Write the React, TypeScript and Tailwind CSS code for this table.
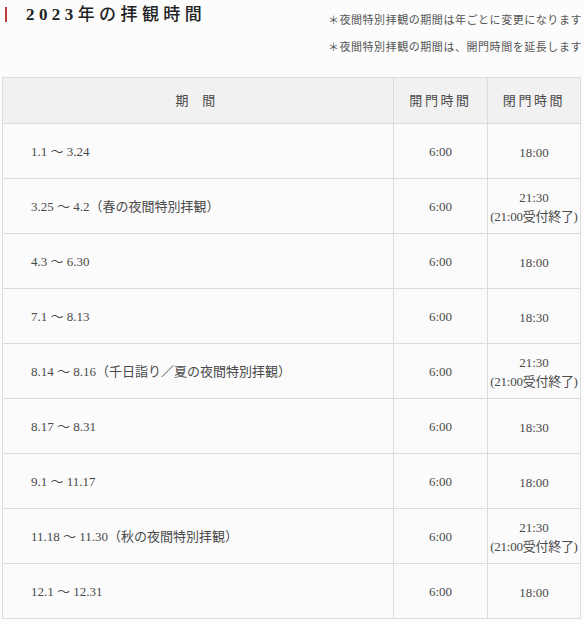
import React from 'react';

const rows: { period: string; open: string; close: string[] }[] = [
    { period: '1.1 〜 3.24', open: '6:00', close: ['18:00'] },
    { period: '3.25 〜 4.2（春の夜間特別拝観）', open: '6:00', close: ['21:30', '(21:00受付終了)'] },
    { period: '4.3 〜 6.30', open: '6:00', close: ['18:00'] },
    { period: '7.1 〜 8.13', open: '6:00', close: ['18:30'] },
    { period: '8.14 〜 8.16（千日詣り／夏の夜間特別拝観）', open: '6:00', close: ['21:30', '(21:00受付終了)'] },
    { period: '8.17 〜 8.31', open: '6:00', close: ['18:30'] },
    { period: '9.1 〜 11.17', open: '6:00', close: ['18:00'] },
    { period: '11.18 〜 11.30（秋の夜間特別拝観）', open: '6:00', close: ['21:30', '(21:00受付終了)'] },
    { period: '12.1 〜 12.31', open: '6:00', close: ['18:00'] },
];

export default function App() {
    return (
        <div className="w-[585px] h-[620px] bg-[#fcfcfc] text-[#333] font-['Liberation_Serif','Noto_Sans_CJK_JP',serif]">
            <div className="flex justify-between pt-[5px] pl-[5px] pr-[3px]">
                <div className="flex items-center h-[18px]">
                    <span className="w-[2px] h-[15px] bg-[#b83a3a]" />
                    <h1 className="ml-[19px] text-[17px] font-medium tracking-[0.26em] text-[#222] leading-none">
                        <span className="font-bold">2023</span>年の拝観時間
                    </h1>
                </div>
                <div className="text-right text-[11px] text-[#555] tracking-[0.05em] leading-[27px] pt-[2px]">
                    <p>＊夜間特別拝観の期間は年ごとに変更になります</p>
                    <p>＊夜間特別拝観の期間は、開門時間を延長します</p>
                </div>
            </div>

            <table className="mt-[16px] ml-[2px] w-[579px] border-collapse text-[13px] text-[#4a4a4a]">
                <thead>
                    <tr className="h-[46px] bg-[#f1f1f1]">
                        <th className="w-[391px] border border-[#dcdcdc] font-normal tracking-[0.4em]">期 間</th>
                        <th className="w-[94px] border border-[#dcdcdc] font-normal tracking-[0.2em]">開門時間</th>
                        <th className="border border-[#dcdcdc] font-normal tracking-[0.2em]">閉門時間</th>
                    </tr>
                </thead>
                <tbody>
                    {rows.map((r) => (
                        <tr key={r.period} className="h-[55px] bg-[#fbfbfb]">
                            <td className="border border-[#dcdcdc] pl-[28px] pt-[2px] whitespace-pre">{r.period}</td>
                            <td className="border border-[#dcdcdc] text-center pt-[2px]">{r.open}</td>
                            <td className="border border-[#dcdcdc] text-center leading-[19px] pt-[2px]">
                                {r.close.map((c) => (
                                    <div key={c} className={c.startsWith('(') ? 'tracking-[-0.02em] whitespace-nowrap' : ''}>
                                        {c}
                                    </div>
                                ))}
                            </td>
                        </tr>
                    ))}
                </tbody>
            </table>
        </div>
    );
}
